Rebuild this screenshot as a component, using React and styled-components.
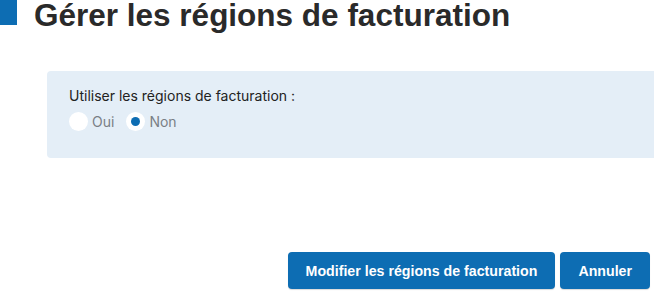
import React, { useState } from 'react';
import styled, { createGlobalStyle } from 'styled-components';

const GlobalStyle = createGlobalStyle`
  html, body {
    margin: 0;
    padding: 0;
    background: #ffffff;
    overflow: hidden;
  }
  body {
    font-family: Inter, "Liberation Sans", Arial, sans-serif;
    color: #222222;
  }
`;

const App = () => {
    const [useRegions, setUseRegions] = useState(false);

    return (
        <Page>
            <GlobalStyle />
            <Header>
                <Marker />
                <Title>Gérer les régions de facturation</Title>
            </Header>

            <Panel>
                <Label>Utiliser les régions de facturation :</Label>
                <Choices>
                    <Choice onClick={() => setUseRegions(true)}>
                        <Radio checked={useRegions} />
                        <span>Oui</span>
                    </Choice>
                    <Choice onClick={() => setUseRegions(false)}>
                        <Radio checked={!useRegions} />
                        <span>Non</span>
                    </Choice>
                </Choices>
            </Panel>

            <Actions>
                <Button>Modifier les régions de facturation</Button>
                <Button>Annuler</Button>
            </Actions>
        </Page>
    );
};

export default App;

const Page = styled.div`
    width: 654px;
    height: 291px;
    display: flex;
    flex-direction: column;
`;

const Header = styled.div`
    display: flex;
    align-items: flex-start;
    gap: 17px;
    height: 30px;
`;

// square partly hidden past the left edge
const Marker = styled.div`
    width: 17px;
    height: 25px;
    background: #0d6db3;
`;

const Title = styled.h1`
    margin: 0;
    font-family: "Liberation Sans", Arial, sans-serif;
    font-size: 31.5px;
    font-weight: 700;
    color: #2a2a2a;
    line-height: 30px;
    white-space: nowrap;
`;

const Panel = styled.div`
    margin: 41px -20px 0 47px;
    height: 87px;
    box-sizing: border-box;
    padding: 15px 22px;
    background: #e4eef7;
    border-radius: 4px 0 0 4px;
`;

const Label = styled.div`
    font-size: 14px;
    color: #222222;
    line-height: 20px;
`;

const Choices = styled.div`
    display: flex;
    gap: 12px;
    margin-top: 6px;
`;

const Choice = styled.label`
    display: flex;
    align-items: center;
    gap: 4px;
    font-size: 14px;
    color: #7a7f85;
    cursor: pointer;
`;

const Radio = styled.span`
    width: 19px;
    height: 19px;
    border-radius: 50%;
    background: #ffffff;
    display: flex;
    align-items: center;
    justify-content: center;

    &::after {
        content: '';
        width: 9px;
        height: 9px;
        border-radius: 50%;
        background: ${p => (p.checked ? '#0d6db3' : 'transparent')};
    }
`;

const Actions = styled.div`
    margin-top: auto;
    margin-bottom: 2px;
    padding-right: 4px;
    display: flex;
    justify-content: flex-end;
    gap: 5px;
`;

const Button = styled.button`
    height: 37px;
    padding: 0 18px;
    border: none;
    border-radius: 4px;
    background: #0d6db3;
    color: #ffffff;
    font-family: "Liberation Sans", Arial, sans-serif;
    font-size: 14.2px;
    font-weight: 700;
    box-shadow: 0 1px 1px rgba(0, 0, 0, 0.15);
    cursor: pointer;
`;
